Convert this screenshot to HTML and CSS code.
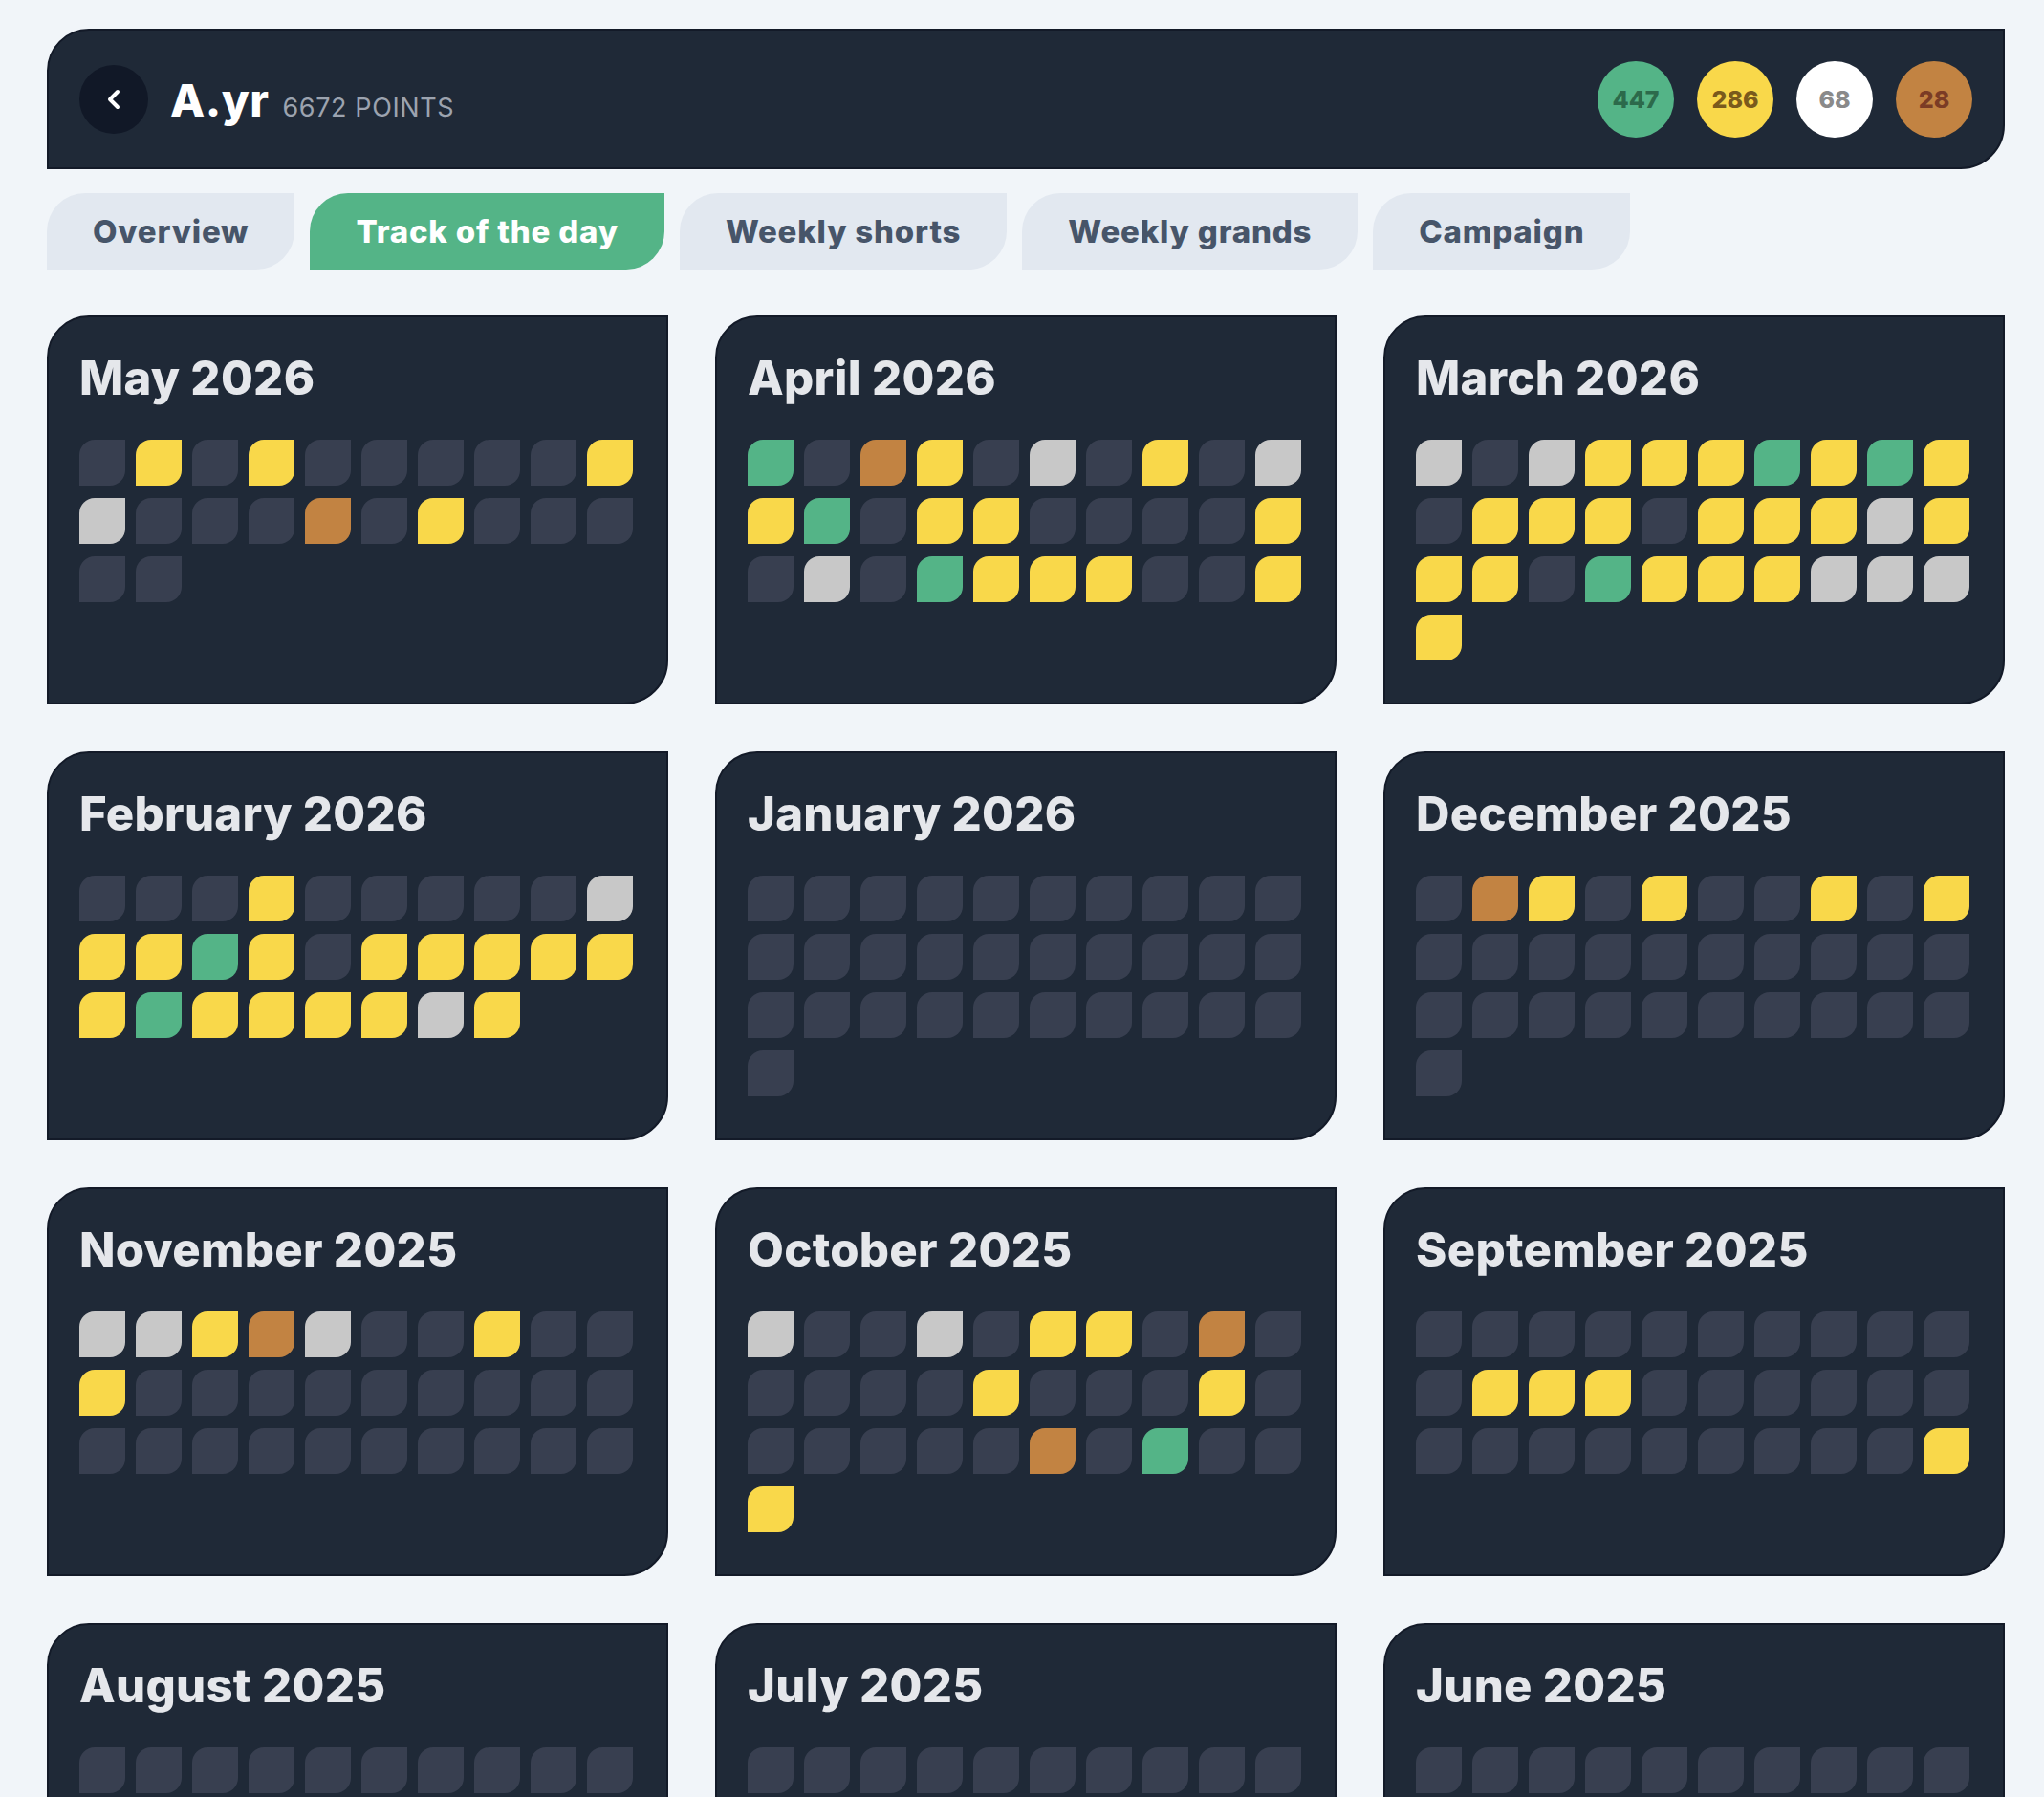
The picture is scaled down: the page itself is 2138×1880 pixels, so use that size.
FILE: index.html
```html
<!DOCTYPE html>
<html lang="en">
<head>
<meta charset="utf-8">
<title>A.yr – Track of the day</title>
<link rel="stylesheet" href="styles.css">
</head>
<body>
<div class="page">
  <header class="header">
    <button class="back" aria-label="Back">
      <svg width="16" height="22" viewBox="0 0 16 22"><polyline points="12,3 4,11 12,19" fill="none" stroke="#ffffff" stroke-width="4" stroke-linecap="round" stroke-linejoin="round"/></svg>
    </button>
    <div class="who">
      <span class="name">A.yr</span>
      <span class="points">6672 POINTS</span>
    </div>
    <div class="badges">
      <span class="badge gold-green">447</span>
      <span class="badge yellow">286</span>
      <span class="badge white">68</span>
      <span class="badge bronze">28</span>
    </div>
  </header>

  <nav class="tabs">
    <span class="tab">Overview</span>
    <span class="tab active">Track of the day</span>
    <span class="tab">Weekly shorts</span>
    <span class="tab">Weekly grands</span>
    <span class="tab">Campaign</span>
  </nav>

  <main class="grid">
    <section class="card">
      <h2 class="title">May 2026</h2>
      <div class="cells">
        <i class="c"></i><i class="c y"></i><i class="c"></i><i class="c y"></i><i class="c"></i><i class="c"></i><i class="c"></i><i class="c"></i><i class="c"></i><i class="c y"></i>
        <i class="c s"></i><i class="c"></i><i class="c"></i><i class="c"></i><i class="c b"></i><i class="c"></i><i class="c y"></i><i class="c"></i><i class="c"></i><i class="c"></i>
        <i class="c"></i><i class="c"></i>
      </div>
    </section>

    <section class="card">
      <h2 class="title">April 2026</h2>
      <div class="cells">
        <i class="c g"></i><i class="c"></i><i class="c b"></i><i class="c y"></i><i class="c"></i><i class="c s"></i><i class="c"></i><i class="c y"></i><i class="c"></i><i class="c s"></i>
        <i class="c y"></i><i class="c g"></i><i class="c"></i><i class="c y"></i><i class="c y"></i><i class="c"></i><i class="c"></i><i class="c"></i><i class="c"></i><i class="c y"></i>
        <i class="c"></i><i class="c s"></i><i class="c"></i><i class="c g"></i><i class="c y"></i><i class="c y"></i><i class="c y"></i><i class="c"></i><i class="c"></i><i class="c y"></i>
      </div>
    </section>

    <section class="card">
      <h2 class="title">March 2026</h2>
      <div class="cells">
        <i class="c s"></i><i class="c"></i><i class="c s"></i><i class="c y"></i><i class="c y"></i><i class="c y"></i><i class="c g"></i><i class="c y"></i><i class="c g"></i><i class="c y"></i>
        <i class="c"></i><i class="c y"></i><i class="c y"></i><i class="c y"></i><i class="c"></i><i class="c y"></i><i class="c y"></i><i class="c y"></i><i class="c s"></i><i class="c y"></i>
        <i class="c y"></i><i class="c y"></i><i class="c"></i><i class="c g"></i><i class="c y"></i><i class="c y"></i><i class="c y"></i><i class="c s"></i><i class="c s"></i><i class="c s"></i>
        <i class="c y"></i>
      </div>
    </section>

    <section class="card">
      <h2 class="title">February 2026</h2>
      <div class="cells">
        <i class="c"></i><i class="c"></i><i class="c"></i><i class="c y"></i><i class="c"></i><i class="c"></i><i class="c"></i><i class="c"></i><i class="c"></i><i class="c s"></i>
        <i class="c y"></i><i class="c y"></i><i class="c g"></i><i class="c y"></i><i class="c"></i><i class="c y"></i><i class="c y"></i><i class="c y"></i><i class="c y"></i><i class="c y"></i>
        <i class="c y"></i><i class="c g"></i><i class="c y"></i><i class="c y"></i><i class="c y"></i><i class="c y"></i><i class="c s"></i><i class="c y"></i>
      </div>
    </section>

    <section class="card">
      <h2 class="title">January 2026</h2>
      <div class="cells">
        <i class="c"></i><i class="c"></i><i class="c"></i><i class="c"></i><i class="c"></i><i class="c"></i><i class="c"></i><i class="c"></i><i class="c"></i><i class="c"></i>
        <i class="c"></i><i class="c"></i><i class="c"></i><i class="c"></i><i class="c"></i><i class="c"></i><i class="c"></i><i class="c"></i><i class="c"></i><i class="c"></i>
        <i class="c"></i><i class="c"></i><i class="c"></i><i class="c"></i><i class="c"></i><i class="c"></i><i class="c"></i><i class="c"></i><i class="c"></i><i class="c"></i>
        <i class="c"></i>
      </div>
    </section>

    <section class="card">
      <h2 class="title">December 2025</h2>
      <div class="cells">
        <i class="c"></i><i class="c b"></i><i class="c y"></i><i class="c"></i><i class="c y"></i><i class="c"></i><i class="c"></i><i class="c y"></i><i class="c"></i><i class="c y"></i>
        <i class="c"></i><i class="c"></i><i class="c"></i><i class="c"></i><i class="c"></i><i class="c"></i><i class="c"></i><i class="c"></i><i class="c"></i><i class="c"></i>
        <i class="c"></i><i class="c"></i><i class="c"></i><i class="c"></i><i class="c"></i><i class="c"></i><i class="c"></i><i class="c"></i><i class="c"></i><i class="c"></i>
        <i class="c"></i>
      </div>
    </section>

    <section class="card">
      <h2 class="title">November 2025</h2>
      <div class="cells">
        <i class="c s"></i><i class="c s"></i><i class="c y"></i><i class="c b"></i><i class="c s"></i><i class="c"></i><i class="c"></i><i class="c y"></i><i class="c"></i><i class="c"></i>
        <i class="c y"></i><i class="c"></i><i class="c"></i><i class="c"></i><i class="c"></i><i class="c"></i><i class="c"></i><i class="c"></i><i class="c"></i><i class="c"></i>
        <i class="c"></i><i class="c"></i><i class="c"></i><i class="c"></i><i class="c"></i><i class="c"></i><i class="c"></i><i class="c"></i><i class="c"></i><i class="c"></i>
      </div>
    </section>

    <section class="card">
      <h2 class="title">October 2025</h2>
      <div class="cells">
        <i class="c s"></i><i class="c"></i><i class="c"></i><i class="c s"></i><i class="c"></i><i class="c y"></i><i class="c y"></i><i class="c"></i><i class="c b"></i><i class="c"></i>
        <i class="c"></i><i class="c"></i><i class="c"></i><i class="c"></i><i class="c y"></i><i class="c"></i><i class="c"></i><i class="c"></i><i class="c y"></i><i class="c"></i>
        <i class="c"></i><i class="c"></i><i class="c"></i><i class="c"></i><i class="c"></i><i class="c b"></i><i class="c"></i><i class="c g"></i><i class="c"></i><i class="c"></i>
        <i class="c y"></i>
      </div>
    </section>

    <section class="card">
      <h2 class="title">September 2025</h2>
      <div class="cells">
        <i class="c"></i><i class="c"></i><i class="c"></i><i class="c"></i><i class="c"></i><i class="c"></i><i class="c"></i><i class="c"></i><i class="c"></i><i class="c"></i>
        <i class="c"></i><i class="c y"></i><i class="c y"></i><i class="c y"></i><i class="c"></i><i class="c"></i><i class="c"></i><i class="c"></i><i class="c"></i><i class="c"></i>
        <i class="c"></i><i class="c"></i><i class="c"></i><i class="c"></i><i class="c"></i><i class="c"></i><i class="c"></i><i class="c"></i><i class="c"></i><i class="c y"></i>
      </div>
    </section>

    <section class="card">
      <h2 class="title">August 2025</h2>
      <div class="cells">
        <i class="c"></i><i class="c"></i><i class="c"></i><i class="c"></i><i class="c"></i><i class="c"></i><i class="c"></i><i class="c"></i><i class="c"></i><i class="c"></i>
        <i class="c"></i><i class="c"></i><i class="c"></i><i class="c"></i><i class="c"></i><i class="c"></i><i class="c"></i><i class="c"></i><i class="c"></i><i class="c"></i>
        <i class="c"></i><i class="c"></i><i class="c"></i><i class="c"></i><i class="c"></i><i class="c"></i><i class="c"></i><i class="c"></i><i class="c"></i><i class="c"></i>
        <i class="c"></i>
      </div>
    </section>

    <section class="card">
      <h2 class="title">July 2025</h2>
      <div class="cells">
        <i class="c"></i><i class="c"></i><i class="c"></i><i class="c"></i><i class="c"></i><i class="c"></i><i class="c"></i><i class="c"></i><i class="c"></i><i class="c"></i>
        <i class="c"></i><i class="c"></i><i class="c"></i><i class="c"></i><i class="c"></i><i class="c"></i><i class="c"></i><i class="c"></i><i class="c"></i><i class="c"></i>
        <i class="c"></i><i class="c"></i><i class="c"></i><i class="c"></i><i class="c"></i><i class="c"></i><i class="c"></i><i class="c"></i><i class="c"></i><i class="c"></i>
        <i class="c"></i>
      </div>
    </section>

    <section class="card">
      <h2 class="title">June 2025</h2>
      <div class="cells">
        <i class="c"></i><i class="c"></i><i class="c"></i><i class="c"></i><i class="c"></i><i class="c"></i><i class="c"></i><i class="c"></i><i class="c"></i><i class="c"></i>
        <i class="c"></i><i class="c"></i><i class="c"></i><i class="c"></i><i class="c"></i><i class="c"></i><i class="c"></i><i class="c"></i><i class="c"></i><i class="c"></i>
        <i class="c"></i><i class="c"></i><i class="c"></i><i class="c"></i><i class="c"></i><i class="c"></i><i class="c"></i><i class="c"></i><i class="c"></i><i class="c"></i>
      </div>
    </section>
  </main>
</div>
</body>
</html>
```

FILE: styles.css
```css
html, body {
  margin: 0;
  padding: 0;
  background: #f1f5f9;
  font-family: Inter, "Noto Sans", "DejaVu Sans", sans-serif;
}

.page {
  width: 2048px;
  margin-left: 49px;
  padding-top: 30px;
  padding-bottom: 60px;
}

/* Header */
.header {
  box-sizing: border-box;
  height: 147px;
  display: flex;
  align-items: center;
  padding: 0 32px;
  background: #1f2937;
  border: 2px solid #131a28;
  border-radius: 44px 0 46px 0;
}

.back {
  width: 72px;
  height: 72px;
  flex-shrink: 0;
  border: none;
  padding: 0;
  border-radius: 50%;
  background: #111827;
  display: flex;
  align-items: center;
  justify-content: center;
}

.who {
  display: flex;
  align-items: baseline;
  margin-left: 23px;
  margin-top: 2px;
}

.name {
  font-size: 47px;
  font-weight: 800;
  color: #ffffff;
  letter-spacing: 0.5px;
}

.points {
  margin-left: 14px;
  font-size: 27px;
  font-weight: 400;
  color: #9ca3af;
  letter-spacing: 0.6px;
}

.badges {
  margin-left: auto;
  display: flex;
  gap: 24px;
}

.badge {
  width: 80px;
  height: 80px;
  border-radius: 50%;
  display: flex;
  align-items: center;
  justify-content: center;
  font-size: 25px;
  font-weight: 800;
  letter-spacing: 0;
}

.badge.gold-green { background: #54b487; color: #2c6a4b; }
.badge.yellow { background: #f9d84a; color: #7a5a1c; }
.badge.white { background: #ffffff; color: #8a8a8a; }
.badge.bronze { background: #c28342; color: #7b3c25; }

/* Tabs */
.tabs {
  display: flex;
  gap: 16px;
  margin-top: 25px;
}

.tab {
  height: 80px;
  padding: 0 48px;
  display: flex;
  align-items: center;
  background: #e2e8f0;
  color: #475569;
  font-size: 33px;
  font-weight: 800;
  letter-spacing: 0.8px;
  border-radius: 40px 0 40px 0;
  white-space: nowrap;
}

.tab.active {
  background: #54b487;
  color: #ffffff;
}

/* Month grid */
.grid {
  display: grid;
  grid-template-columns: repeat(3, 650px);
  column-gap: 49px;
  row-gap: 49px;
  margin-top: 48px;
}

.card {
  box-sizing: border-box;
  height: 407px;
  padding: 32px;
  background: #1f2937;
  border: 2px solid #131a28;
  border-radius: 44px 0 46px 0;
}

.title {
  margin: 0 0 32px;
  font-size: 49px;
  line-height: 64px;
  font-weight: 800;
  color: #e5e7eb;
  letter-spacing: 0.3px;
}

.cells {
  display: grid;
  grid-template-columns: repeat(10, 48px);
  column-gap: 11px;
  row-gap: 13px;
}

.c {
  display: block;
  width: 48px;
  height: 48px;
  border-radius: 16px 0 16px 0;
  background: #383f50;
}

.c.y { background: #f9d84a; }
.c.g { background: #54b487; }
.c.b { background: #c28342; }
.c.s { background: #c8c8c8; }
```
